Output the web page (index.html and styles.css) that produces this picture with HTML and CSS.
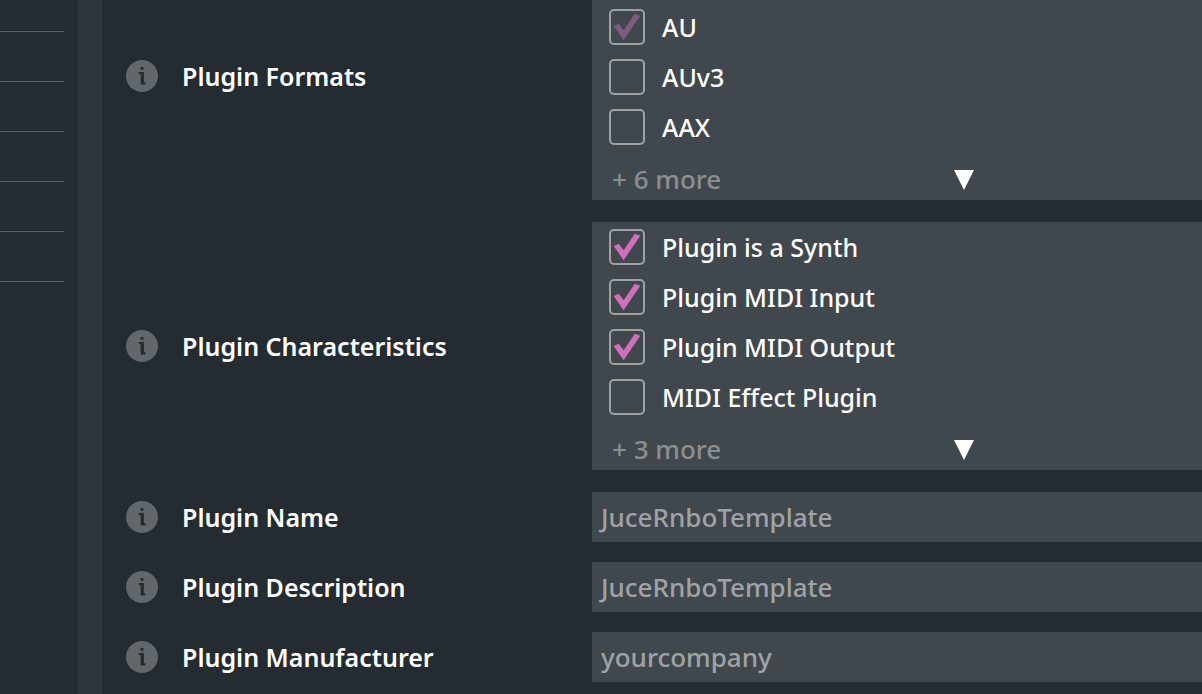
FILE: index.html
```html
<!DOCTYPE html>
<html lang="en">
<head>
<meta charset="utf-8">
<title>Plugin settings</title>
<link rel="stylesheet" href="styles.css">
</head>
<body>
<svg class="defs" aria-hidden="true">
  <symbol id="tick" viewBox="0 0 36 36"><path d="M4.7 17 9.7 14.7 14.7 21.2 25.7 4.7 31.3 6.8 14.6 31.2Z"/></symbol>
  <symbol id="info" viewBox="0 0 32 32"><circle class="info-disc" cx="16" cy="16" r="16"/><path class="info-mark" d="M14.5 7h3v2.7h-3zM12.7 12h5.2v10.2h1.5v2.3h-4.7v-10.2h-2z"/></symbol>
</svg>
<div class="app">
  <aside class="sidebar">
    <ul class="tree"><li></li><li></li><li></li><li></li><li></li><li></li></ul>
  </aside>
  <div class="divider"></div>
  <main class="settings">
    <div class="row">
      <svg class="info"><use href="#info"/></svg>
      <span class="label" id="formats">Plugin Formats</span>
      <div class="panel panel-clipped" role="group" aria-labelledby="formats">
        <label class="option"><span class="box"><input type="checkbox" checked disabled><svg class="tick"><use href="#tick"/></svg></span>AU</label>
        <label class="option"><span class="box"><input type="checkbox"><svg class="tick"><use href="#tick"/></svg></span>AUv3</label>
        <label class="option"><span class="box"><input type="checkbox"><svg class="tick"><use href="#tick"/></svg></span>AAX</label>
        <button class="more" type="button"><span class="more-text">+ 6 more</span><svg class="arrow" viewBox="0 0 20 20"><path d="M0 0H20L10 20Z"/></svg></button>
      </div>
    </div>
    <div class="row">
      <svg class="info"><use href="#info"/></svg>
      <span class="label" id="traits">Plugin Characteristics</span>
      <div class="panel" role="group" aria-labelledby="traits">
        <label class="option"><span class="box"><input type="checkbox" checked><svg class="tick"><use href="#tick"/></svg></span>Plugin is a Synth</label>
        <label class="option"><span class="box"><input type="checkbox" checked><svg class="tick"><use href="#tick"/></svg></span>Plugin MIDI Input</label>
        <label class="option"><span class="box"><input type="checkbox" checked><svg class="tick"><use href="#tick"/></svg></span>Plugin MIDI Output</label>
        <label class="option"><span class="box"><input type="checkbox"><svg class="tick"><use href="#tick"/></svg></span>MIDI Effect Plugin</label>
        <button class="more" type="button"><span class="more-text">+ 3 more</span><svg class="arrow" viewBox="0 0 20 20"><path d="M0 0H20L10 20Z"/></svg></button>
      </div>
    </div>
    <div class="fields">
      <div class="row">
        <svg class="info"><use href="#info"/></svg>
        <label class="label" for="name">Plugin Name</label>
        <input class="field" id="name" type="text" placeholder="JuceRnboTemplate">
      </div>
      <div class="row">
        <svg class="info"><use href="#info"/></svg>
        <label class="label" for="description">Plugin Description</label>
        <input class="field" id="description" type="text" placeholder="JuceRnboTemplate">
      </div>
      <div class="row">
        <svg class="info"><use href="#info"/></svg>
        <label class="label" for="maker">Plugin Manufacturer</label>
        <input class="field" id="maker" type="text" placeholder="yourcompany">
      </div>
    </div>
  </main>
</div>
</body>
</html>
```
FILE: styles.css
```css
* { box-sizing: border-box; }
body {
  margin: 0;
  background: #242b31;
  color: #fff;
  font: 500 26px/36px "Noto Sans", "Open Sans", sans-serif;
  overflow: hidden;
}
.defs { display: none; }
.app { display: flex; min-height: 100vh; }
.sidebar { flex: 0 0 78px; padding-right: 14px; }
.tree { list-style: none; margin: -18px 0 0; padding: 0; }
.tree li { height: 50px; border-bottom: 1px solid #586060; }
.divider { flex: 0 0 24px; background: #2d343b; }
.settings {
  flex: 1;
  display: flex;
  flex-direction: column;
  gap: 22px;
  min-width: 0;
  margin-top: -48px;
  padding-left: 24px;
}
.fields { display: flex; flex-direction: column; gap: 20px; }
.row {
  display: grid;
  grid-template-columns: 56px 410px 1fr;
  align-items: center;
}
.info { width: 32px; height: 32px; }
.info-disc { fill: #61676a; }
.info-mark { fill: #242b31; }
.label { font-size: 25px; font-weight: 600; }
.panel { background: #41484d; }
.panel-clipped { padding-top: 50px; }
.option {
  display: flex;
  align-items: center;
  gap: 17px;
  height: 50px;
  padding-left: 17px;
  font-size: 25px;
}
.box { display: grid; width: 36px; height: 36px; }
.box > * { grid-area: 1 / 1; }
.box input {
  appearance: none;
  width: 36px;
  height: 36px;
  margin: 0;
  border: 2px solid #a0a1a2;
  border-radius: 5px;
}
.tick { width: 36px; height: 36px; fill: #d06fbc; visibility: hidden; pointer-events: none; }
.box input:checked + .tick { visibility: visible; }
.box input:disabled + .tick { fill: #7e5b7f; }
.more {
  display: grid;
  grid-template-columns: 342px 20px;
  align-items: center;
  width: 100%;
  height: 48px;
  padding: 8px 0 0 20px;
  border: 0;
  background: none;
  color: #8b8f92;
  font: inherit;
  text-align: left;
}
.more-text { padding-bottom: 3px; }
.arrow { width: 20px; height: 20px; fill: #fff; }
.field {
  width: 100%;
  height: 50px;
  padding: 0 5px;
  border: 0;
  background: #41484d;
  color: #fff;
  font: inherit;
  text-indent: 4px;
}
.field::placeholder { color: #a0a3a6; opacity: 1; }
```
